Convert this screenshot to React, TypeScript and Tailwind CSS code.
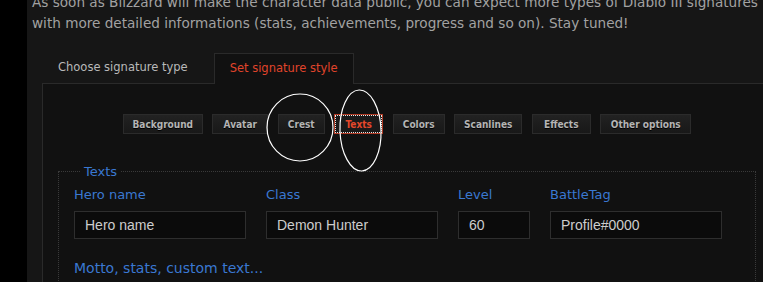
import type { ReactNode } from 'react';

const styleTabs: { label: string; w: string }[] = [
  { label: 'Background', w: 'w-[80px]' },
  { label: 'Avatar', w: 'w-[56px]' },
  { label: 'Crest', w: 'w-[47px]' },
  { label: 'Texts', w: 'w-[49px]' },
  { label: 'Colors', w: 'w-[52px]' },
  { label: 'Scanlines', w: 'w-[68px]' },
  { label: 'Effects', w: 'w-[59px]' },
  { label: 'Other options', w: 'w-[91px]' },
];

const btnFont = "font-['DejaVu_Sans_Condensed','DejaVu_Sans',sans-serif] [font-stretch:condensed] text-[10px] font-bold";

function StyleButton({ label, w, active }: { label: string; w: string; active?: boolean }) {
  if (active) {
    return (
      <button type="button" className={`flex h-[20px] ${w} items-stretch border border-[#b13b25] bg-[#1a1a1a] p-[1px]`}>
        <span
          className={`flex flex-1 items-center justify-center ${btnFont} text-[#e5482b] outline-1 outline-dotted outline-[#e8e8e8]`}
        >
          {label}
        </span>
      </button>
    );
  }
  return (
    <button
      type="button"
      className={`flex h-[20px] ${w} items-center justify-center border border-[#2b2b2b] bg-gradient-to-b from-[#222222] to-[#181818] ${btnFont} text-[#b4b4b4] [text-shadow:0_1px_0_#000]`}
    >
      {label}
    </button>
  );
}

function Field({ label, value, width }: { label: string; value: string; width: string }) {
  return (
    <div className="flex flex-col">
      <span className="text-[13px] leading-[16px] text-[#3a78d2]">{label}</span>
      <input
        readOnly
        value={value}
        className={`mt-[8px] h-[28px] ${width} border border-[#2e2e2e] bg-[#0b0b0b] pl-[10px] font-['Liberation_Sans',Arial,sans-serif] text-[14px] text-[#cdcdcd] outline-none`}
      />
    </div>
  );
}

function Tab({ children, active }: { children: ReactNode; active?: boolean }) {
  return active ? (
    <div className="relative z-10 -mb-px flex h-[31px] items-center border border-b-0 border-[#2a2a2a] bg-[#111111] px-[15px] pb-px text-[11.5px] text-[#e0442b]">
      {children}
    </div>
  ) : (
    <div className="flex h-[30px] items-center px-[16px] text-[11.5px] text-[#b9b9b9]">{children}</div>
  );
}

export default function App() {
  return (
    <div className="relative flex h-[282px] w-[763px] overflow-hidden bg-black font-['DejaVu_Sans',Verdana,sans-serif]">
      <div className="w-[27px] shrink-0 bg-black" />
      <div className="w-[760px] shrink-0 bg-[#161616]">
        <p className="-mt-[8px] pl-[5px] text-[13.6px] leading-[21px] whitespace-nowrap text-[#a2a2a2]">
          As soon as Blizzard will make the character data public, you can expect more types of Diablo III signatures
          <br />
          with more detailed informations (stats, achievements, progress and so on). Stay tuned!
        </p>

        <div className="ml-[15px] mt-[19px] flex items-end gap-[10px]">
          <Tab>Choose signature type</Tab>
          <Tab active>Set signature style</Tab>
        </div>

        <div className="ml-[15px] h-[220px] w-[730px] border border-[#2a2a2a] bg-[#111111] pt-[30px]">
          <div className="flex justify-center gap-[9.5px]">
            {styleTabs.map((t) => (
              <StyleButton key={t.label} label={t.label} w={t.w} active={t.label === 'Texts'} />
            ))}
          </div>

          <fieldset className="mx-[15px] mt-[30px] border border-dotted border-[#3a3a3a] px-[15px] pb-[20px]">
            <legend className="ml-[6px] px-[4px] text-[13px] leading-[15px] text-[#3a78d2]">Texts</legend>
            <div className="mt-[8px] flex gap-[20px]">
              <Field label="Hero name" value="Hero name" width="w-[172px]" />
              <Field label="Class" value="Demon Hunter" width="w-[172px]" />
              <Field label="Level" value="60" width="w-[72px]" />
              <Field label="BattleTag" value="Profile#0000" width="w-[172px]" />
            </div>
            <div className="mt-[21px] text-[14px] leading-[16px] text-[#3a78d2]">Motto, stats, custom text...</div>
          </fieldset>
        </div>
      </div>

      <svg className="pointer-events-none absolute inset-0" width="763" height="282" fill="none" stroke="#ffffff" strokeWidth="1.2">
        <ellipse cx="300" cy="127.5" rx="33" ry="33.5" />
        <ellipse cx="360.5" cy="130.5" rx="20.5" ry="40.5" transform="rotate(-2 360.5 130.5)" />
      </svg>
    </div>
  );
}
